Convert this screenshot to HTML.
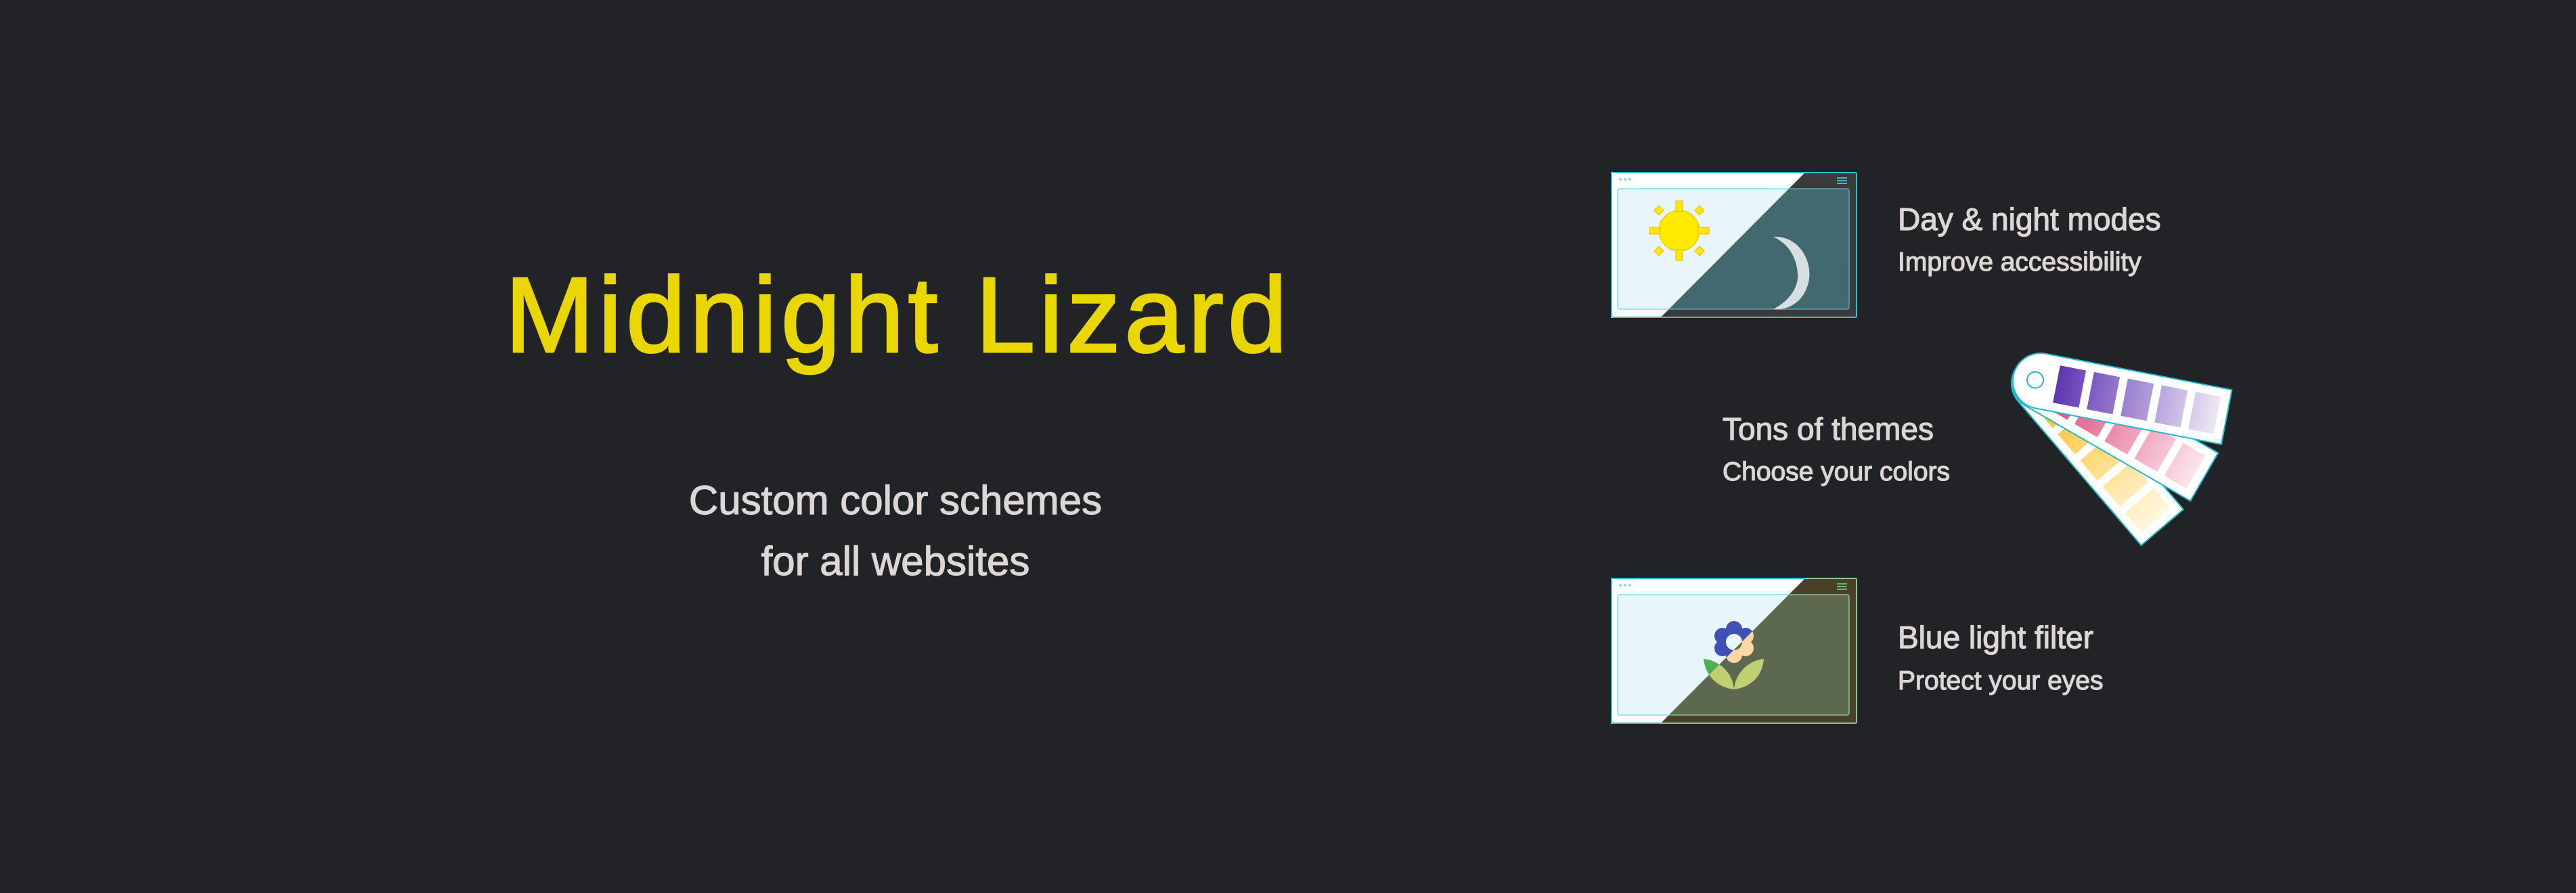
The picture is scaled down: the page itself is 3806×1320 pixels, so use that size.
<!DOCTYPE html>
<html><head><meta charset="utf-8"><style>
html,body{margin:0;padding:0;background:#222326;}
svg{display:block}
text{font-family:"Liberation Sans",Arial,sans-serif;}
</style></head><body>
<svg width="3806" height="1320" viewBox="0 0 3806 1320" xmlns="http://www.w3.org/2000/svg">
<defs>
<clipPath id="dk"><polygon points="288,0 364,0 364,216 73,216"/></clipPath>
<clipPath id="lt"><polygon points="0,0 288,0 73,216 0,216"/></clipPath>
<linearGradient id="gp" x1="0" x2="1" y1="0" y2="0"><stop offset="0" stop-color="#5e35b1"/><stop offset="1" stop-color="#ede7f6"/></linearGradient>
<linearGradient id="gk" x1="0" x2="1" y1="0" y2="0"><stop offset="0" stop-color="#e04a7c"/><stop offset="1" stop-color="#fce4ec"/></linearGradient>
<linearGradient id="gy" x1="0" x2="1" y1="0" y2="0"><stop offset="0" stop-color="#ffc02a"/><stop offset="1" stop-color="#fff8e1"/></linearGradient>
<g id="strip">
<path d="M6,-41 L286,-41 L286,41 L6,41 A41,41 0 0 1 6,-41 Z" fill="#fff" stroke="#1fb9cc" stroke-width="2"/>
</g>
</defs>
<rect width="3806" height="1320" fill="#222326"/>
<text x="1327" y="520" font-size="158" fill="#ead600" stroke="#ead600" stroke-width="3" text-anchor="middle" letter-spacing="6">Midnight Lizard</text>
<g fill="#dcd6d4" stroke="#dcd6d4" stroke-width="1.2">
<text x="1323" y="760" font-size="60" text-anchor="middle">Custom color schemes</text>
<text x="1323" y="850" font-size="60" text-anchor="middle">for all websites</text>
<text x="2804" y="340" font-size="46">Day &amp; night modes</text>
<text x="2804" y="400" font-size="39">Improve accessibility</text>
<text x="2545" y="650" font-size="46">Tons of themes</text>
<text x="2545" y="710" font-size="39">Choose your colors</text>
<text x="2804" y="958" font-size="46">Blue light filter</text>
<text x="2804" y="1019" font-size="39">Protect your eyes</text>
</g>

<!-- box 1 -->
<g transform="translate(2380,254)">
 <g clip-path="url(#lt)">
  <rect x="0" y="0" width="364" height="216" fill="#fff"/>
  <rect x="10" y="25" width="342" height="178" rx="3" fill="#e8f5fa" stroke="#80deea" stroke-width="1.5"/>
  <g fill="#ffea00" stroke="#f5b800" stroke-width="1">
   <ellipse cx="101" cy="87" rx="30" ry="30"/>
   <rect x="96" y="43" width="10" height="16"/><rect x="96" y="115" width="10" height="16"/>
   <rect x="57" y="82" width="16" height="10"/><rect x="129" y="82" width="16" height="10"/>
   <rect x="66" y="52" width="10" height="10" transform="rotate(45 71 57)"/>
   <rect x="126" y="52" width="10" height="10" transform="rotate(45 131 57)"/>
   <rect x="66" y="112" width="10" height="10" transform="rotate(45 71 117)"/>
   <rect x="126" y="112" width="10" height="10" transform="rotate(45 131 117)"/>
  </g>
  <circle cx="14" cy="11" r="2" fill="#80deea"/><circle cx="21" cy="11" r="2" fill="#80deea"/><circle cx="28" cy="11" r="2" fill="#80deea"/>
 </g>
 <g clip-path="url(#dk)">
  <rect x="0" y="0" width="364" height="216" fill="#3b3b3c"/>
  <rect x="10" y="25" width="342" height="178" rx="3" fill="#426870" stroke="#5fa3ad" stroke-width="1.5"/>
  <path d="M240,96 C282,94 302,140 290,170 C282,193 262,205 240,203 C266,190 278,168 276,150 C274,125 262,106 240,96 Z" fill="#d4e0e2"/>
  <rect x="334" y="8" width="15" height="2" fill="#4fb3bf"/><rect x="334" y="12" width="15" height="2" fill="#4fb3bf"/><rect x="334" y="16" width="15" height="2" fill="#4fb3bf"/>
 </g>
 <rect x="1" y="1" width="362" height="214" rx="2" fill="none" stroke="#29c1d4" stroke-width="2"/>
</g>

<!-- swatches -->
<g transform="translate(3009,562)">
 <g transform="rotate(49.5)"><use href="#strip"/>
  <g fill="url(#gy)"><rect x="30" y="-28" width="242" height="56"/></g>
  <g fill="#fff"><rect x="69" y="-30" width="12" height="60"/><rect x="120" y="-30" width="12" height="60"/><rect x="171" y="-30" width="12" height="60"/><rect x="222" y="-30" width="12" height="60"/></g>
 </g>
 <g transform="rotate(30)"><use href="#strip"/>
  <g fill="url(#gk)"><rect x="30" y="-28" width="242" height="56"/></g>
  <g fill="#fff"><rect x="69" y="-30" width="12" height="60"/><rect x="120" y="-30" width="12" height="60"/><rect x="171" y="-30" width="12" height="60"/><rect x="222" y="-30" width="12" height="60"/></g>
 </g>
 <g transform="rotate(11)"><use href="#strip"/>
  <g fill="url(#gp)"><rect x="30" y="-28" width="242" height="56"/></g>
  <g fill="#fff"><rect x="69" y="-30" width="12" height="60"/><rect x="120" y="-30" width="12" height="60"/><rect x="171" y="-30" width="12" height="60"/><rect x="222" y="-30" width="12" height="60"/></g>
  <circle cx="-2" cy="0" r="12" fill="none" stroke="#1fb9cc" stroke-width="2"/>
 </g>
</g>

<!-- box 2 -->
<g transform="translate(2380,854)">
 <g clip-path="url(#lt)">
  <rect x="0" y="0" width="364" height="216" fill="#fff"/>
  <rect x="10" y="25" width="342" height="178" rx="3" fill="#e8f5fa" stroke="#80deea" stroke-width="1.5"/>
  <g fill="#4caf50"><path d="M137,120 C160,122 180,140 182,165 C158,162 140,146 137,120 Z"/><path d="M226,120 C224,146 206,162 182,165 C184,140 204,122 226,120 Z"/></g>
  <g fill="#3f51b5">
   <circle cx="182" cy="76" r="12"/><circle cx="199" cy="86" r="12"/><circle cx="199" cy="104" r="12"/><circle cx="182" cy="114" r="12"/><circle cx="165" cy="104" r="12"/><circle cx="165" cy="86" r="12"/><circle cx="182" cy="95" r="18"/>
  </g>
  <circle cx="182" cy="95" r="12" fill="#e8f5fa"/>
  <circle cx="14" cy="11" r="2" fill="#80deea"/><circle cx="21" cy="11" r="2" fill="#80deea"/><circle cx="28" cy="11" r="2" fill="#80deea"/>
 </g>
 <g clip-path="url(#dk)">
  <rect x="0" y="0" width="364" height="216" fill="#4b3f2c"/>
  <rect x="10" y="25" width="342" height="178" rx="3" fill="#5c694e" stroke="#8bc48a" stroke-width="1.5"/>
  <g fill="#c0cf72"><path d="M137,120 C160,122 180,140 182,165 C158,162 140,146 137,120 Z"/><path d="M226,120 C224,146 206,162 182,165 C184,140 204,122 226,120 Z"/></g>
  <g fill="#ffd7a0">
   <circle cx="182" cy="76" r="12"/><circle cx="199" cy="86" r="12"/><circle cx="199" cy="104" r="12"/><circle cx="182" cy="114" r="12"/><circle cx="165" cy="104" r="12"/><circle cx="165" cy="86" r="12"/><circle cx="182" cy="95" r="18"/>
  </g>
  <circle cx="182" cy="95" r="12" fill="#5c694e"/>
  <rect x="334" y="8" width="15" height="2" fill="#6fb07a"/><rect x="334" y="12" width="15" height="2" fill="#6fb07a"/><rect x="334" y="16" width="15" height="2" fill="#6fb07a"/>
 </g>
 <rect x="1" y="1" width="362" height="214" rx="2" fill="none" stroke="#8bc48a" stroke-width="2"/>
 <path d="M288,1 L3,1 Q1,1 1,3 L1,213 Q1,215 3,215 L73,215" fill="none" stroke="#29c1d4" stroke-width="2"/>
</g>
</svg>
</body></html>
